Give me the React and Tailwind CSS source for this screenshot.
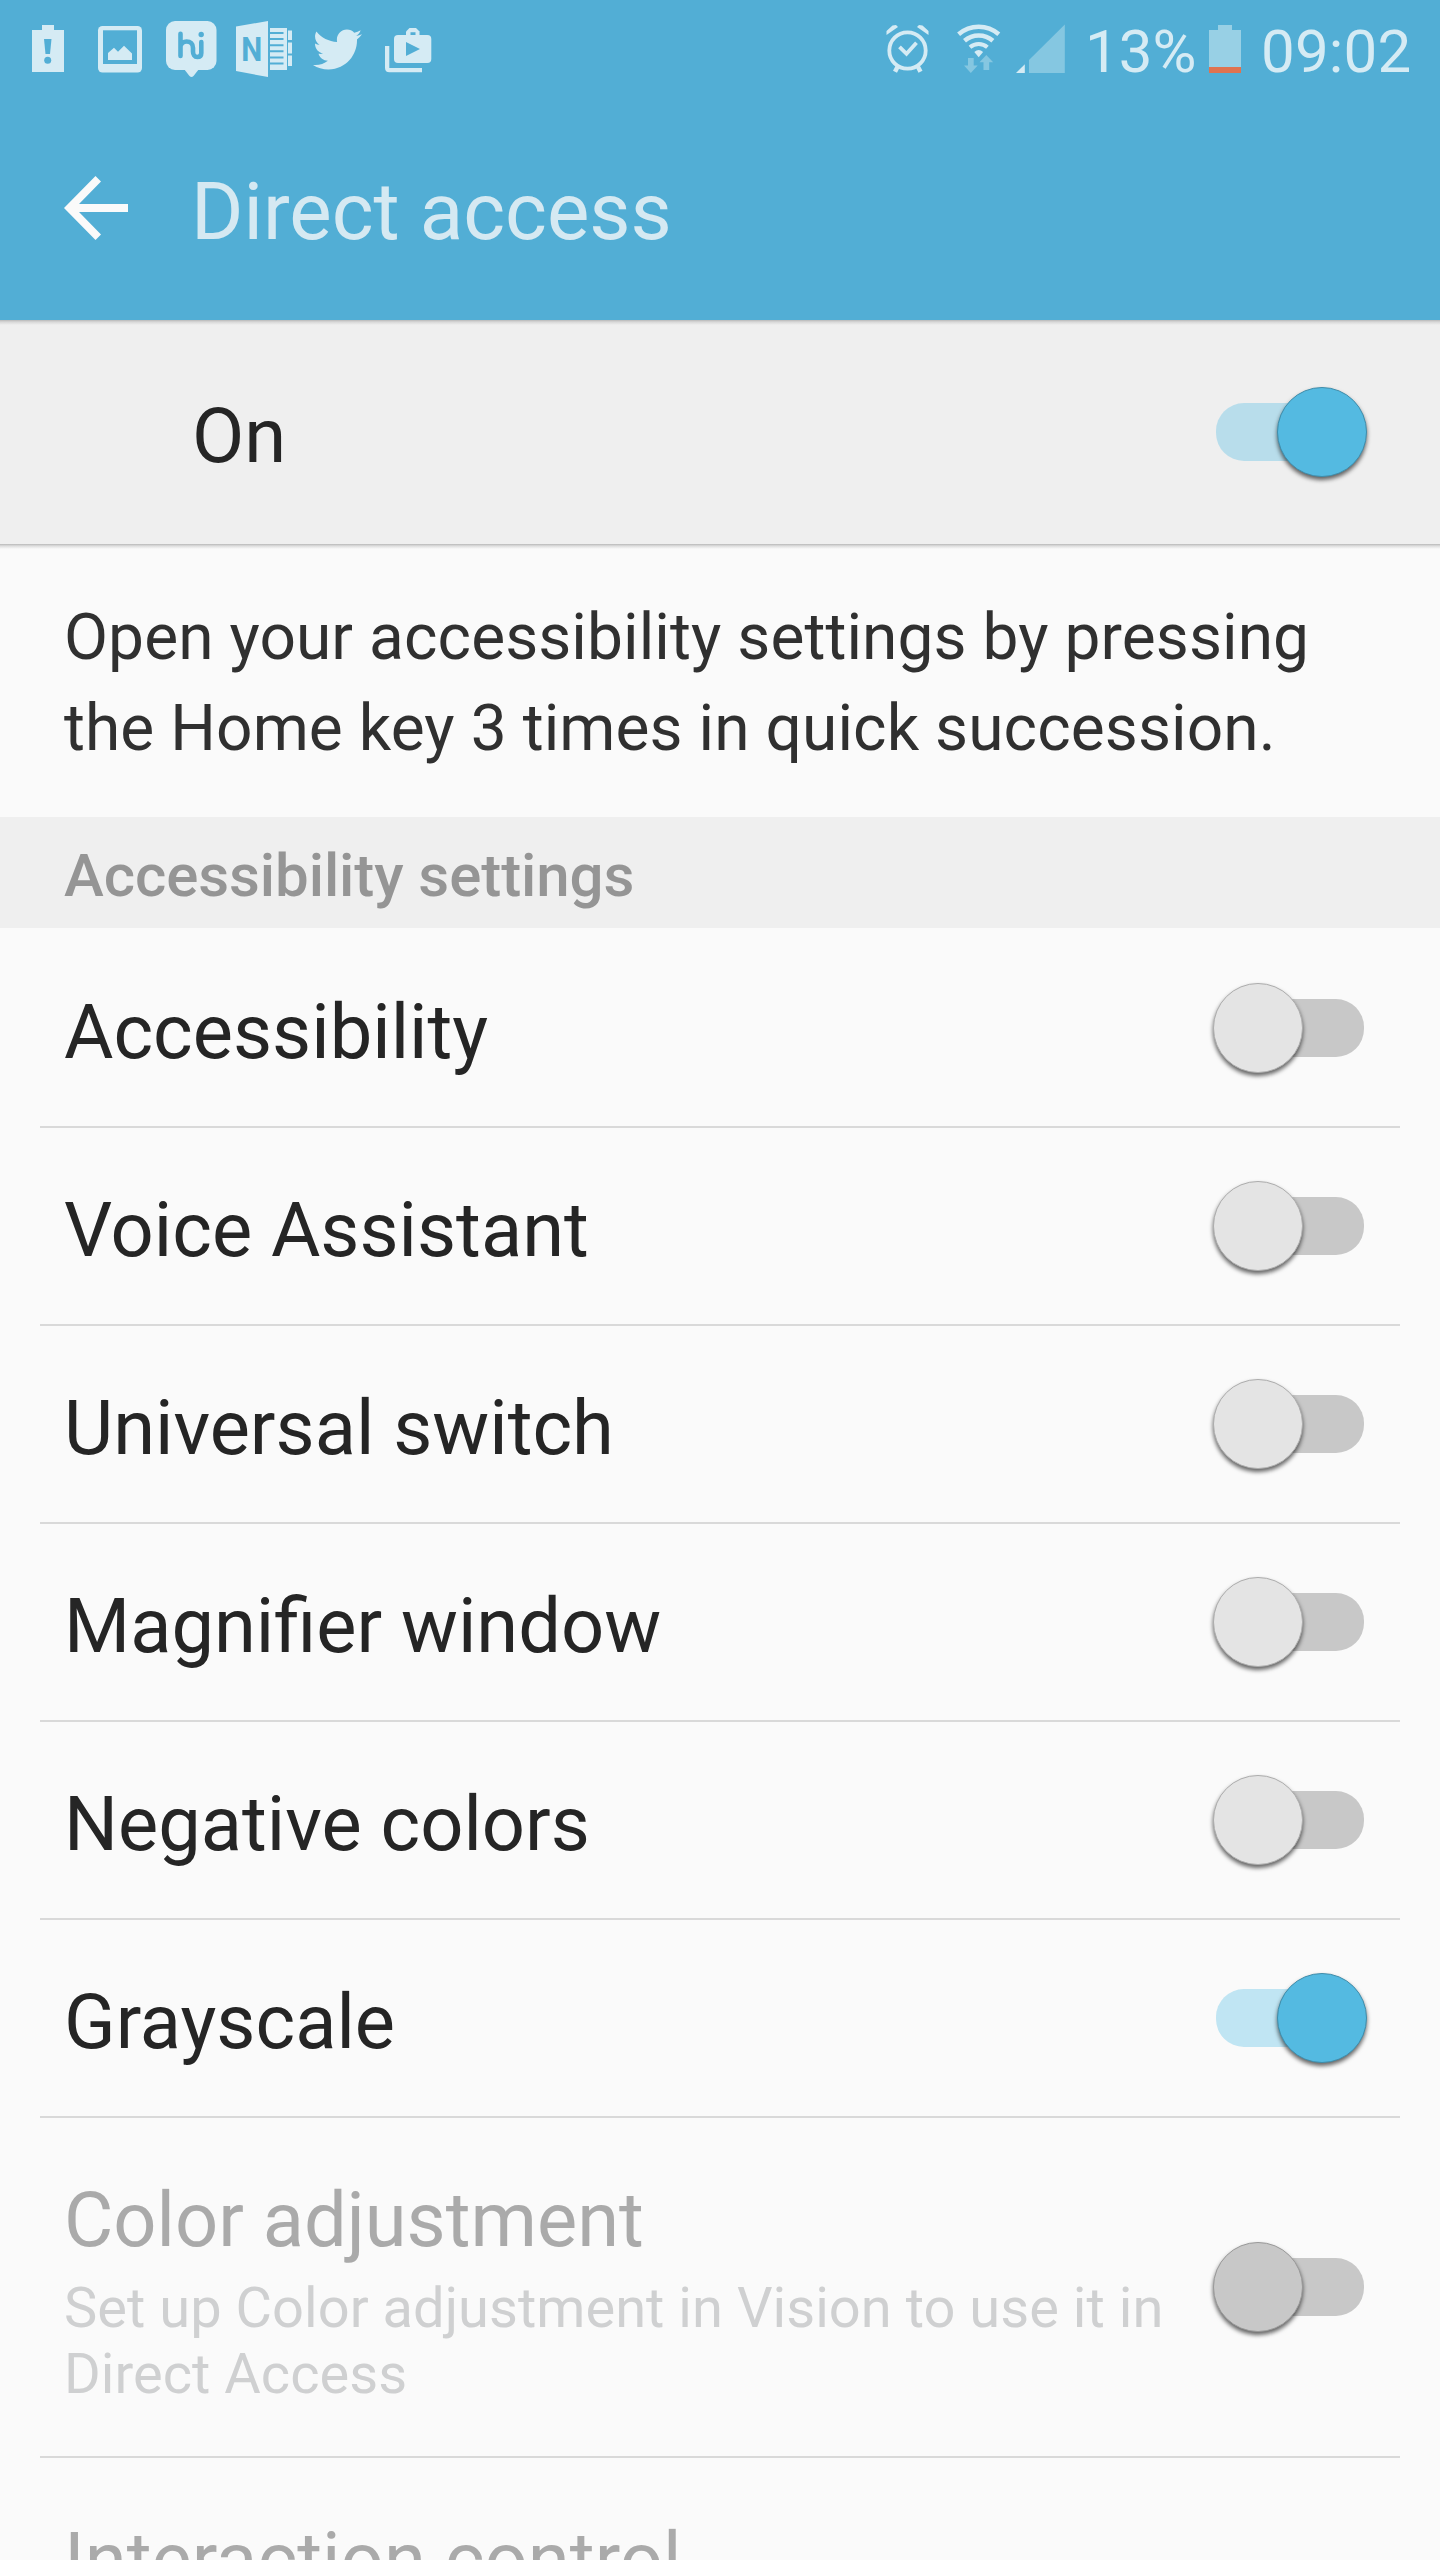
import React from "react";
import { FaTwitter } from "react-icons/fa";

const SKY = "#52aed5";
const ICE = "#d5ebf4";

function BatteryAlert() {
  return (
    <svg className="h-24 w-[72px]" viewBox="12 0 72 96">
      <path fill={ICE} d="M32 30h10v-5h12v5h10v42H32z" />
      <path fill={SKY} d="M44 39h7.5L50 54h-4.5z" />
      <circle cx="47.7" cy="60.3" r="3.5" fill={SKY} />
    </svg>
  );
}

function Photo() {
  return (
    <svg className="h-24 w-[72px]" viewBox="84 0 72 96">
      <rect x="98" y="26" width="44" height="46.500" rx="4.500" fill={ICE} />
      <rect x="103" y="30.300" width="34" height="33.700" fill={SKY} />
      <path fill={ICE} d="M108 60v-7l6-5.300 4 4 6-6 8 7.800V60z" />
    </svg>
  );
}

function HikeChat() {
  return (
    <svg className="h-24 w-[72px]" viewBox="156 0 72 96">
      <rect x="166" y="21" width="50.500" height="49" rx="9" fill={ICE} />
      <path fill={ICE} d="M184 69h15l-5.500 7q-2 2-4 0z" />
      <g fill="none" stroke={SKY} strokeWidth="4.600" strokeLinecap="round">
        <path d="M180.500 33.700V56M180.500 46c1-3 3.500-4.500 6-4.500 4 0 6.500 2.500 6.500 6.500v3.500c0 3 1.500 5.500 4.300 5.500 2.700 0 4-1.500 4-4V42" />
      </g>
      <circle cx="201.200" cy="34.500" r="2.700" fill={SKY} />
    </svg>
  );
}

function Notebook() {
  return (
    <svg className="h-24 w-[72px]" viewBox="228 0 72 96">
      <path fill={ICE} d="M236 26.500 268 21v56l-32-6z" />
      <path fill={ICE} d="M270 28h17v42h-17zM288 30.500h4V40h-4zM288 42.500h4V53.500h-4zM288 55.500h4V66h-4z" />
      <path stroke={SKY} strokeWidth="2" d="M270 33h13.500M270 39h13.500M270 45.200h13.500M270 51.300h13.500M270 57.400h13.500M270 63.500h13.500" />
      <text x="251.700" y="61" textAnchor="middle" fill={SKY} fontSize="33" fontWeight="700" textLength="21" lengthAdjust="spacingAndGlyphs">N</text>
    </svg>
  );
}

function PlayBag() {
  return (
    <svg className="h-24 w-[72px]" viewBox="372 0 72 96">
      <path fill={ICE} d="M385 46h4.300v22H422v4.300h-32.500q-4.500 0-4.500-4.500z" />
      <rect x="394" y="35" width="37.300" height="28" rx="4" fill={ICE} />
      <path fill={ICE} d="M406 36v-4.500l3.500-3.500h6.500l3.500 3.500V36z" />
      <path fill={SKY} d="M410.500 32.300h5V35h-5zM406 42v14l14-7z" />
    </svg>
  );
}

function Alarm() {
  return (
    <svg className="h-24 w-[72px]" viewBox="872 0 72 96">
      <g fill="none" stroke={ICE} strokeWidth="3.800">
        <circle cx="907.500" cy="50.500" r="18.200" />
        <path d="m899.500 46.800 7 7 10-11" />
        <path strokeWidth="4.500" d="m898 66-3 5.700M917.500 66l3 5.700" />
      </g>
      <path fill={ICE} d="M886.500 35v-4l6-5.500 3.500-.5 2 2zM928.500 35v-4l-6-5.500-3.500-.5-2 2z" />
    </svg>
  );
}

function Wifi() {
  return (
    <svg className="h-24 w-[72px]" viewBox="944 0 72 96">
      <g fill="none" stroke={ICE} strokeWidth="4.500">
        <path d="M958.600 34.300a30.600 30.600 0 0 1 40.200 0" />
        <path d="M964.500 40.800a21.700 21.700 0 0 1 28.400 0" />
        <path strokeWidth="4" d="M970 47.300a13.300 13.300 0 0 1 17.400 0" />
      </g>
      <path fill={ICE} d="M978.700 57.300 974.300 52q4.400-3.800 8.800 0z" />
      <path fill="#85c7e1" d="M968 58h5.700v7.500h4L970.800 73l-6.800-7.500h4zM983.500 70h5.700v-7.800h4L986.300 55l-6.800 7.200h4z" />
    </svg>
  );
}

function Signal() {
  return (
    <svg className="h-24 w-[52px]" viewBox="1014 0 52 96">
      <path fill={ICE} d="M1016 73h8.800v-8.800z" />
      <path fill="#85c7e1" d="M1029 73h35.800V24.500L1029 60z" />
    </svg>
  );
}

function BatteryLow() {
  return (
    <svg className="h-24 w-8" viewBox="1209 0 32 96">
      <path fill="#98d0e5" d="M1209 30h9v-5h14v5h9v37h-32z" />
      <path fill="#df7350" d="M1209 67h32v6h-32z" />
    </svg>
  );
}

function StatusBar() {
  return (
    <div className="flex h-24 items-start justify-between pl-3 text-[60px] leading-none text-[#d5ebf4]">
      <div className="flex">
        <BatteryAlert />
        <Photo />
        <HikeChat />
        <Notebook />
        <div className="flex h-24 w-[72px] items-center justify-center pl-0.5">
          <FaTwitter size={49} className="mt-[3px]" />
        </div>
        <PlayBag />
      </div>
      <div className="flex w-[568px]">
        <Alarm />
        <Wifi />
        <div className="-ml-0.5">
          <Signal />
        </div>
        <span className="ml-[19px] w-[124px] pt-[22px]">13%</span>
        <BatteryLow />
        <span className="ml-5 pt-[22px] tracking-[0.2px]">09:02</span>
      </div>
    </div>
  );
}

function Toggle({ on = false, disabled = false }) {
  const track = on ? "ml-[3px] bg-[#54bee6]/35" : "ml-[3px] bg-[#c8c8c8]";
  const thumb = on
    ? "ml-16 bg-[#54bae1] border-[#3f8dab]"
    : disabled
      ? "bg-[#c8c8c8] border-[#999999]"
      : "bg-[#e4e4e4] border-[#adadad]";
  return (
    <div className="grid h-[90px] w-[154px] shrink-0 items-center" role="switch" aria-checked={on}>
      <div className={`col-start-1 row-start-1 h-[58px] w-[148px] rounded-[28px] ${track}`} />
      <div className={`col-start-1 row-start-1 size-[90px] rounded-full border shadow-[0_3px_4px_rgba(0,0,0,0.6)] ${thumb}`} />
    </div>
  );
}

function SettingRow({ title, summary, on, disabled, first, tall }) {
  return (
    <div
      className={`mx-10 flex items-center justify-between border-t-2 pl-6 pr-[33px] ${first ? "border-transparent" : "border-[#d9d9d9]"} ${tall ? "h-[340px]" : "h-[198px]"}`}
    >
      <div className={summary ? "w-[1120px] pt-2" : "pt-2"}>
        <div className={`text-[75.8px] leading-[92px] ${disabled ? "text-[#aaaaaa]" : "pb-0 -mb-0.5 text-[#252525]"}`}>{title}</div>
        {summary && <div className="mt-2 text-[56px] leading-[66px] tracking-[0.03px] text-[#cfd0d1]">{summary}</div>}
      </div>
      <Toggle on={on} disabled={disabled} />
    </div>
  );
}

const rows = [
  { title: "Accessibility", first: true },
  { title: "Voice Assistant" },
  { title: "Universal switch" },
  { title: "Magnifier window" },
  { title: "Negative colors" },
  { title: "Grayscale", on: true },
  {
    title: "Color adjustment",
    summary: "Set up Color adjustment in Vision to use it in Direct Access",
    disabled: true,
    tall: true,
  },
];

export default function App() {
  return (
    <div className="h-[2560px] w-[1440px] overflow-hidden bg-[#fafafa] font-['Roboto',sans-serif]">
      <header className="h-80 bg-[#52aed5]">
        <StatusBar />
        <div className="flex h-56 items-center">
          <svg className="ml-16 h-16 w-16" viewBox="64 176 64 64">
            <path fill="#fafafa" d="M128 204H79l22-22.500-5.500-5.500L64 208l31.500 32 5.500-5.500L79 212h49z" />
          </svg>
          <h1 className="ml-[63px] mt-2 text-[80px] leading-none text-[#d5e9f2]">Direct access</h1>
        </div>
      </header>

      <section className="flex h-56 items-center justify-between bg-[#efefef] bg-[linear-gradient(to_bottom,#b8b8b8_0px,#d8d8d8_2px,#efefef_5px)] pl-48 pr-[73px]">
        <span className="pt-2 text-[76px] leading-none text-[#252525]">On</span>
        <Toggle on />
      </section>

      <p className="h-[273px] bg-[linear-gradient(to_bottom,#b8b8b8_0px,#dedede_2px,#fafafa_5px)] px-16 pt-12 text-[64px] leading-[91px] tracking-[0.08px] text-[#303030]">
        Open your accessibility settings by pressing
        <br />
        the Home key 3 times in quick succession.
      </p>

      <h2 className="h-[111px] bg-[#efefef] pl-16 pt-[5px] text-[60px] font-medium leading-[107px] tracking-[-0.08px] text-[#959595]">
        Accessibility settings
      </h2>

      {rows.map((row) => (
        <SettingRow key={row.title} {...row} />
      ))}
      <div className="mx-10 border-t-2 border-[#d9d9d9] pl-6 pt-[57px] text-[76px] leading-[90px] text-[#aaaaaa]">
        Interaction control
      </div>
    </div>
  );
}
